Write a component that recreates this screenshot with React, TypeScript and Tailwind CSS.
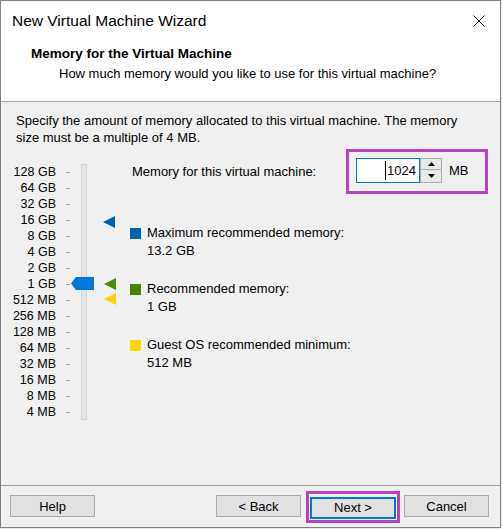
import React from 'react';

const scale = [
  '128 GB', '64 GB', '32 GB', '16 GB', '8 GB', '4 GB', '2 GB', '1 GB',
  '512 MB', '256 MB', '128 MB', '64 MB', '32 MB', '16 MB', '8 MB', '4 MB',
];

const legend = [
  { color: 'bg-[#0063b1]', label: 'Maximum recommended memory:', value: '13.2 GB' },
  { color: 'bg-[#498205]', label: 'Recommended memory:', value: '1 GB' },
  { color: 'bg-[#ffd700]', label: 'Guest OS recommended minimum:', value: '512 MB' },
];

function Marker({ fill, className }: { fill: string; className: string }) {
  return (
    <svg className={className} width="12" height="12" viewBox="0 0 12 12">
      <polygon points="12,0 12,12 0,6" fill={fill} />
    </svg>
  );
}

function Button({ label }: { label: string }) {
  return (
    <button className="w-[85px] h-[22px] bg-[#e1e1e1] border border-[#adadad] text-[13px] text-black leading-none">
      {label}
    </button>
  );
}

export default function App() {
  return (
    <div className="w-[502px] h-[529px] bg-[#e9e9e9] font-['Liberation_Sans',Arial,sans-serif] text-black">
      <div className="w-[501px] h-[528px] border border-[#7f7f7f] flex flex-col bg-[#f0f0f0]">
        {/* title bar */}
        <div className="h-[39px] bg-white flex items-center justify-between pl-[11px] pr-[15px]">
          <span className="text-[15.5px] leading-none">New Virtual Machine Wizard</span>
          <svg width="12" height="12" viewBox="0 0 12 12">
            <path d="M0.5 0.5 L11.5 11.5 M11.5 0.5 L0.5 11.5" stroke="#111" strokeWidth="1" />
          </svg>
        </div>

        {/* header */}
        <div className="h-[62px] bg-white border-b border-[#a0a0a0] pt-[6px]">
          <div className="pl-[30px] text-[13.5px] font-bold leading-[16px]">Memory for the Virtual Machine</div>
          <div className="pl-[58px] mt-[4px] text-[13px] leading-[16px]">
            How much memory would you like to use for this virtual machine?
          </div>
        </div>

        {/* body */}
        <div className="flex-1 pt-[10px] pl-[15px]">
          <p className="text-[13px] leading-[17px]">
            Specify the amount of memory allocated to this virtual machine. The memory
            <br />
            size must be a multiple of 4 MB.
          </p>

          <div className="flex mt-[3px]">
            {/* slider */}
            <div className="relative w-[100px] shrink-0 pt-[15px] flex">
              <div className="flex flex-col -ml-[8px]">
                {scale.map((s) => (
                  <div key={s} className="h-[16px] flex items-center">
                    <span className="w-[48px] shrink-0 whitespace-nowrap text-right text-[12.5px] leading-none">{s}</span>
                    <span className="ml-[10px] w-[4px] h-px bg-[#a6a6a6]" />
                  </div>
                ))}
              </div>
              <div className="ml-[11px] w-[6px] h-[256px] bg-[#e6e6e6] border border-[#d4d4d4]" />

              <svg className="absolute left-[55px] top-[128px]" width="23" height="13" viewBox="0 0 23 13">
                <polygon points="0,6.5 5,0 23,0 23,13 5,13" fill="#0078d7" />
              </svg>
              <Marker fill="#0063b1" className="absolute left-[87px] top-[67px]" />
              <Marker fill="#4a8a0c" className="absolute left-[88px] top-[129px]" />
              <Marker fill="#fcd20c" className="absolute left-[88px] top-[144px]" />
            </div>

            {/* settings */}
            <div className="ml-[14px] w-[358px] flex flex-col">
              <div className="flex items-center justify-between">
                <span className="pl-[2px] text-[13px] leading-none">Memory for this virtual machine:</span>
                <div className="w-[142px] h-[45px] border-[3px] border-[#b444bc] pl-[7px] pt-[6px] flex items-start">
                  <div className="w-[64px] h-[25px] bg-white border border-[#0078d7] flex items-center justify-end pr-[3px]">
                    <span className="w-px h-[19px] bg-black mr-px" />
                    <span className="text-[13px] leading-none">1024</span>
                  </div>
                  <div className="w-[22px] h-[25px] flex flex-col">
                    <div className="h-[12px] bg-[#e9e9e9] border border-[#adadad] flex items-center justify-center">
                      <svg width="7" height="4" viewBox="0 0 7 4"><polygon points="0,4 7,4 3.5,0" fill="#000" /></svg>
                    </div>
                    <div className="h-[13px] bg-[#e9e9e9] border border-t-0 border-[#adadad] flex items-center justify-center">
                      <svg width="7" height="4" viewBox="0 0 7 4"><polygon points="0,0 7,0 3.5,4" fill="#000" /></svg>
                    </div>
                  </div>
                  <span className="ml-[7px] mt-[6px] text-[13px] leading-none">MB</span>
                </div>
              </div>

              <div className="mt-[30px] flex flex-col gap-[20px]">
                {legend.map((l) => (
                  <div key={l.label} className="flex items-start">
                    <span className={`mt-[4px] w-[11px] h-[11px] ${l.color}`} />
                    <div className="ml-[6px] text-[13px] leading-[18px]">
                      <div>{l.label}</div>
                      <div>{l.value}</div>
                    </div>
                  </div>
                ))}
              </div>
            </div>
          </div>
        </div>

        {/* footer */}
        <div className="h-[42px] border-t border-[#a0a0a0] pt-[5px] pl-[9px] flex items-start">
          <div className="h-[30px] flex items-center">
            <Button label="Help" />
          </div>
          <div className="ml-[121px] h-[30px] flex items-center">
            <Button label="< Back" />
          </div>
          <div className="ml-[5px] border-[3px] border-[#b444bc] p-px">
            <button className="w-[86px] h-[22px] bg-[#e1e1e1] border-2 border-[#0078d7] text-[13px] text-black leading-none">
              Next &gt;
            </button>
          </div>
          <div className="ml-[4px] h-[30px] flex items-center">
            <Button label="Cancel" />
          </div>
        </div>
      </div>
    </div>
  );
}
